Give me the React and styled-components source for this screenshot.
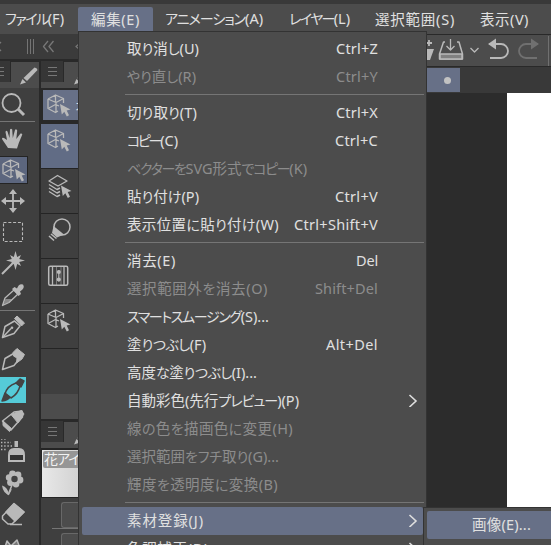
import React, { useLayoutEffect, useRef, useState } from "react";
import styled, { createGlobalStyle, css } from "styled-components";

const c = {
  panel: "#4c4c4c",
  dark: "#393939",
  tools: "#3f3f3f",
  line: "#292929",
  active: "#677087",
  rule: "#757575",
  text: "#e0e0e0",
  muted: "#8c8c8c",
  icon: "#b9b9b9",
};

const Global = createGlobalStyle`
  * { box-sizing: border-box; }
  body { margin: 0; overflow: hidden; background: ${c.panel}; }
`;

const Window = styled.div`
  position: relative;
  width: 551px;
  height: 545px;
  overflow: hidden;
  display: flex;
  flex-direction: column;
  background: ${c.dark};
  font-family: "Noto Sans", "Noto Sans CJK JP", sans-serif;
  font-size: 15px;
  color: ${c.text};
`;

const TitleEdge = styled.div`
  height: 4px;
  flex: none;
  background: #393939;
`;

const MenuBar = styled.nav`
  height: 30px;
  flex: none;
  display: flex;
  align-items: flex-start;
  padding-top: 3px;
  background: ${c.panel};
`;

const MenuTitle = styled.div`
  width: ${(p) => p.$w}px;
  flex: none;
  height: 24px;
  padding-left: ${(p) => p.$pad}px;
  padding-bottom: 1px;
  display: flex;
  align-items: center;
  border-radius: 2px 2px 0 0;
  background: ${(p) => (p.$open ? c.active : "transparent")};
`;

const Words = styled.span`
  white-space: nowrap;
  line-height: 24px;
  display: block;
  font-weight: 400;
  font-feature-settings: "palt";
`;

const Latin = styled.span`
  font-size: 14.5px;
`;

const Kana = styled.span`
  font-size: 14px;
`;

const KANA = /([\u3041-\u30ff]+)/;

/* Sets a label to an exact advance width: kana are tightened first, any slack is shared by every glyph. */
function Label({ text, width }) {
  const ref = useRef(null);
  const [fit, setFit] = useState({ all: 0, kana: 0 });
  const parts = text.split(KANA);
  const kana = parts.filter((s) => KANA.test(s)).join("").length;
  useLayoutEffect(() => {
    const slack = width - ref.current.getBoundingClientRect().width;
    const all = slack / text.length;
    setFit(kana && slack < 0 ? { all: 0, kana: slack / kana } : { all, kana: all });
  }, []);
  return (
    <Words ref={ref}>
      {parts.map((s, i) =>
        KANA.test(s) ? (
          <Kana key={i} style={{ letterSpacing: fit.kana }}>{s}</Kana>
        ) : (
          <Latin key={i} style={{ letterSpacing: fit.all }}>{s}</Latin>
        )
      )}
    </Words>
  );
}

const Body = styled.div`
  flex: 1;
  min-height: 0;
  display: flex;
`;

const Left = styled.div`
  width: 79px;
  flex: none;
  display: flex;
  flex-direction: column;
`;

const DockGrip = styled.div`
  height: 25px;
  flex: none;
  background: #3b3b3b;
`;

const Columns = styled.div`
  display: flex;
  flex: 1;
  background: ${c.line};
  padding-top: 2px;
  gap: 2px;
`;

const Column = styled.div`
  width: ${(p) => p.$w}px;
  flex: none;
  background: ${c.tools};
`;

const TabStrip = styled.div`
  height: 27px;
  display: flex;
  background: #363636;
  border-bottom: 6px solid ${c.panel};
  padding-left: ${(p) => p.$pad}px;
`;

const GripBox = styled.div`
  width: ${(p) => p.$w}px;
  flex: none;
  padding-top: 5px;
`;

const Tab = styled.div`
  flex: 1;
  min-width: 0;
  height: 21px;
  padding-top: 3px;
  background: ${c.panel};
  border-left: 1px solid ${c.line};
  border-top: 1px solid ${c.line};
`;

const Tool = styled.div`
  height: ${(p) => p.$h || 31}px;
  width: 28px;
  display: flex;
  align-items: center;
  justify-content: center;
  padding-right: 2px;
  ${(p) => p.$on && css`
    background: #5c667e;
    border: 1px solid #242424;
    border-left: 0;
    padding-right: 0;
  `}
`;

const PaintTool = styled.div`
  width: 26px;
  height: 26px;
  margin: 3px 0 2px;
  background: #55cbd8;
`;

const Rule = styled.div`
  height: 1px;
  width: 35px;
  background: ${c.rule};
`;

const SubHead = styled.div`
  height: 36px;
  border: solid ${c.line};
  border-width: 2px 0 4px 2px;
  padding-left: 3px;
  display: flex;
  align-items: center;
  gap: 3px;
  overflow: hidden;
  white-space: nowrap;
  background: ${c.active};
  font-size: 13px;
`;

const SubTool = styled.div`
  height: 45px;
  padding: 3px 0 0 5px;
  background: ${(p) => (p.$on ? "#616c85" : c.tools)};
  border-bottom: 1px solid #242424;
`;

const Spacer = styled.div`
  height: ${(p) => p.$h}px;
  background: ${(p) => p.$bg || "transparent"};
`;

const BrushPreview = styled.div`
  height: 50px;
  border: solid #242424;
  border-width: 2px 0 1px 1px;
  padding: 1px;
  background: linear-gradient(90deg, #e8e8e8, #d2d2d2);
`;

const BrushName = styled.div`
  width: 40px;
  height: 17px;
  border-radius: 2px;
  padding-left: 1px;
  white-space: nowrap;
  background: #969696;
  color: #f2f2f2;
  font-size: 14px;
  line-height: 15px;
  letter-spacing: -1px;
  font-feature-settings: "palt";
`;

const Slot = styled.div`
  height: 26px;
  margin: 4px 0 0 20px;
  border: 1px solid #686868;
  border-right: 0;
  border-radius: 3px 0 0 3px;
  background: ${c.panel};
`;

const SlotRule = styled.div`
  height: 1px;
  margin-left: 11px;
  background: ${c.rule};
`;

const Main = styled.main`
  flex: 1;
  display: flex;
  flex-direction: column;
  padding-left: 347px;
  min-width: 0;
`;

const CommandBar = styled.div`
  height: 33px;
  flex: none;
  border-top: 1px solid ${c.line};
  border-bottom: 1px solid ${c.line};
  background: ${c.panel};
`;

const DocTabs = styled.div`
  height: 26px;
  flex: none;
  padding: 1px 0;
  background: ${c.dark};
`;

const DocTab = styled.div`
  width: 34px;
  height: 24px;
  display: flex;
  align-items: center;
  padding-left: 18px;
  background: ${c.active};
`;

const Dot = styled.i`
  width: 7px;
  height: 7px;
  border-radius: 50%;
  background: #c2c2c2;
`;

const Canvas = styled.div`
  flex: 1;
  padding-left: 81px;
  background: #2c2c2c;
`;

const Paper = styled.div`
  height: 100%;
  background: #fff;
`;

const Dropdown = styled.div`
  position: absolute;
  left: 78px;
  top: 31px;
  width: 349px;
  height: 516px;
  padding: 3px 2px 0 3px;
  border: 1px solid #333;
  background: ${c.panel};
`;

const Item = styled.div`
  height: 28px;
  width: 341px;
  display: flex;
  align-items: center;
  justify-content: space-between;
  padding: 0 45px 2px 45px;
  border-radius: 2px;
  color: ${(p) => (p.$off ? c.muted : c.text)};
  background: ${(p) => (p.$on ? c.active : "transparent")};
  ${(p) => p.$arrow && css`padding-right: 5px;`}
`;

const Divider = styled.div`
  height: 1px;
  margin: 3px 0 4px 43px;
  background: ${c.rule};
`;

const Submenu = styled(Dropdown)`
  left: 423px;
  top: 507px;
  width: 140px;
`;

const SubmenuItem = styled(Item)`
  width: 140px;
`;

const Svg = ({ w = 26, h = 26, children }) => (
  <svg width={w} height={h} viewBox={`0 0 ${w} ${h}`} fill="none" stroke={c.icon} strokeWidth="1.5" strokeLinejoin="round" display="block" style={{ flex: "none" }}>
    {children}
  </svg>
);

const Lines = ({ w }) => (
  <Svg w={w} h={11}>
    <path d={`M0 1.5H${w}M0 5.5H${w}M0 9.5H${w}`} stroke="#777" strokeWidth="1" />
  </Svg>
);

const PenTip = ({ x = 0 }) => (
  <Svg w={28} h={24}>
    <g transform={`translate(${x} -1)`} fill={c.icon} stroke="none">
      <path d="M12.5 14L23.5 3.5Q26 3.5 26.5 6L16 17Z" />
      <path d="M11.5 15l3.5 3.5L9 20.5Z" />
    </g>
  </Svg>
);

const Cursor = ({ x, y }) => (
  <path transform={`translate(${x} ${y})`} d="M0 0L10.5 5.6L6.7 6.5L9 11.2L6.8 12.5L4.3 7.8L1.8 10.6Z" fill={c.icon} stroke="none" />
);

const Cube = () => (
  <Svg>
    <path d="M2 7L9.5 3L17.5 6.5V11M2 7V16.5L9.5 20.5L12 19M2 7L10 10.5L17.5 6.5M10 10.5V20M3 16L9.5 12.5L13 14M9.5 3V10" strokeWidth="1.3" />
    <Cursor x={14} y={12} />
  </Svg>
);

const Layers = () => (
  <Svg>
    <path d="M3 9L11.5 3.5L21 9L12 14ZM3 12.5L11 17.5L14 16M3 16L11 21L14 19.5M3 19.5L11 24.5L14 23" strokeWidth="1.4" />
    <Cursor x={15} y={13.5} />
  </Svg>
);

const Bulb = () => (
  <Svg>
    <circle cx="16" cy="10" r="8" />
    <path d="M7.5 9L18 17.5L11 20.5L6 16Z" fill={c.icon} stroke="none" />
    <path d="M5 17L10.5 21.5M3 19L8 23.5" strokeWidth="1.6" />
  </Svg>
);

const Film = () => (
  <Svg>
    <rect x="2.7" y="4.2" width="19" height="19" rx="1.5" />
    <path d="M6.5 4.5V23M18 4.5V23" strokeWidth="1.3" />
    <path d="M10.5 4.5V23M15 4.5V23" strokeWidth=".5" />
    <circle cx="12.8" cy="10" r="2.1" fill={c.icon} stroke="none" />
    <circle cx="12.8" cy="17.5" r="2.1" fill={c.icon} stroke="none" />
    <path d="M12.8 8V19.5" strokeWidth="1.2" />
  </Svg>
);

const NibShape = ({ solid }) => (
  <g>
    <path d="M2.5 23.5L5 12.5L14.5 7L20 12L14 19.5Z" />
    {solid ? (
      <path d="M13 6.5L17 2.5L24.5 8.5L22 13L16.5 17L17 12L13.5 10Z" fill={c.icon} strokeWidth="1" />
    ) : (
      <>
        <path d="M14.5 4.5L17 2L24.5 9L21.5 12Z" fill={c.icon} strokeWidth="1" />
        <path d="M3 23L11 14.5" />
        <circle cx="12" cy="13.8" r="1.3" fill={c.icon} stroke="none" />
      </>
    )}
  </g>
);

const icons = {
  zoom: <Svg><circle cx="11.5" cy="11" r="9" strokeWidth="1.8" /><path d="M18 17L24 23" strokeWidth="3" /></Svg>,
  hand: <Svg><path d="M8 22Q4 16 2 13Q2 11 4 12L7 14L5.5 6Q6 4 7.5 5.5L9.5 12L10 3.5Q11 2 12.2 3.5L12.8 12L15 4Q16 2.5 17.2 4.5L16.3 13L20.5 7.5Q22 7 22.3 8.5L18.8 17L17 22.5Z" fill={c.icon} stroke="none" /></Svg>,
  cube: <Cube />,
  move: <Svg><path d="M13 5V21M5 13H21" strokeWidth="1.8" /><path d="M13 1l4 5H9ZM13 25l4-5H9ZM1 13l5-4V17ZM25 13l-5-4V17Z" fill={c.icon} stroke="none" /></Svg>,
  marquee: <Svg><rect x="3.5" y="3.5" width="19" height="19" strokeDasharray="3 1.8" strokeWidth="1.1" /></Svg>,
  wand: <Svg><path d="M2 24L12 14" strokeWidth="2" /><path d="M15.5 1L17.2 7L21 5L19.2 9L25 10.5L19.2 12L21 16L17.2 14L15.5 20L13.8 14L10 16L11.8 12L6 10.5L11.8 9L10 5L13.8 7Z" fill={c.icon} stroke="none" /></Svg>,
  dropper: <Svg><path d="M2.5 23.5L5 16L14 8L18 12L9 20.5Z" strokeWidth="1.3" /><path d="M12 7L14.5 5L17 6.5Q19 1 23 2.5Q25.5 6 20 9.5L21 12L18.5 14Z" fill={c.icon} stroke="none" /><path d="M5.5 17H12L8.5 20.5L3 23Z" fill={c.icon} stroke="none" opacity=".6" /></Svg>,
  nib: <Svg><NibShape /></Svg>,
  pencil: <Svg><NibShape solid /></Svg>,
  marker: <Svg><path d="M2.5 13L14 4L22 3L22.5 9L11 22Z" /><path d="M11 6.5L21.5 2.5L24 6L18 15Z" fill={c.icon} strokeWidth="1" /><path d="M3 13L11.5 20.5L9.5 23.5L3 17.5Z" fill={c.icon} strokeWidth="1" /></Svg>,
  spray: <Svg><path d="M14.5 2H18V8H14.5ZM8 16Q8 9 14 9H19Q25 9 25 16V23H8Z" fill={c.icon} stroke="none" /><rect x="10" y="16" width="13" height="5" fill="#333" stroke="none" /><path d="M1 0H7M1 3.5H11M1 7H13M1 10.5H7" strokeWidth="1.4" strokeDasharray="1.4 1.8" /></Svg>,
  flower: <Svg><g fill={c.icon} stroke="none"><circle cx="12.5" cy="4" r="3.4" /><circle cx="18" cy="5" r="3.4" /><circle cx="20" cy="10" r="3.4" /><circle cx="16" cy="14" r="3.4" /><circle cx="10.5" cy="12.5" r="3.4" /><circle cx="9" cy="7.5" r="3.2" /><path d="M2 15.5Q8 17 9 25Q3 23 2 15.5ZM9 25Q9 20 12 19Z" /></g><circle cx="14.5" cy="9" r="3.2" fill="#414141" stroke="none" /><path d="M12 15L8 25" /></Svg>,
  eraser: <Svg><path d="M2.5 15L14 3L24 11L12 23H8L2.5 18Z" /><path d="M6 11L14 2.5L24 11L15 20Z" fill={c.icon} /><path d="M10 23.5H22" /></Svg>,
  blend: <Svg><path d="M2 24L7 9L11 14L17 8L23 24Z" fill="#777" /></Svg>,
};

const menus = [
  ["ファイル(F)", 78, 5, 59],
  ["編集(E)", 75, 13, 49, true],
  ["アニメーション(A)", 123, 12, 98],
  ["レイヤー(L)", 87, 13, 61],
  ["選択範囲(S)", 105, 12, 80],
  ["表示(V)", 80, 12, 49],
];

const entries = [
  { t: "取り消し(U)", w: 72, k: "Ctrl+Z", kw: 42 },
  { t: "やり直し(R)", w: 69, k: "Ctrl+Y", kw: 42, off: true },
  null,
  { t: "切り取り(T)", w: 70, k: "Ctrl+X", kw: 42 },
  { t: "コピー(C)", w: 51, k: "Ctrl+C", kw: 43 },
  { t: "ベクターをSVG形式でコピー(K)", w: 180, off: true },
  { t: "貼り付け(P)", w: 72, k: "Ctrl+V", kw: 43 },
  { t: "表示位置に貼り付け(W)", w: 152, k: "Ctrl+Shift+V", kw: 84 },
  null,
  { t: "消去(E)", w: 49, k: "Del", kw: 22 },
  { t: "選択範囲外を消去(O)", w: 141, k: "Shift+Del", kw: 63, off: true },
  { t: "スマートスムージング(S)...", w: 142 },
  { t: "塗りつぶし(F)", w: 79, k: "Alt+Del", kw: 52 },
  { t: "高度な塗りつぶし(I)...", w: 130 },
  { t: "自動彩色(先行プレビュー)(P)", w: 172, arrow: true },
  { t: "線の色を描画色に変更(H)", w: 166, off: true },
  { t: "選択範囲をフチ取り(G)...", w: 152, off: true },
  { t: "輝度を透明度に変換(B)", w: 151, off: true },
  null,
  { t: "素材登録(J)", w: 77, arrow: true, on: true },
  { t: "色調補正(D)", w: 82, arrow: true },
];

const Chevron = () => (
  <Svg w={10} h={14}><path d="M1.5 2L8 8L1.5 14" stroke="#dedede" strokeWidth="1.6" strokeLinejoin="miter" /></Svg>
);

const Grip = () => (
  <Svg w={79} h={25}>
    <path d="M27.5 5V20M30.5 5V20M33.5 5V20" stroke="#747474" strokeWidth="1" />
    <path d="M48 7L43.5 12.5L48 18M53.5 7L49 12.5L53.5 18M1 8L-3 12.5L1 17M79 10L76 12.5L79 15" stroke="#777" strokeWidth="1.3" />
  </Svg>
);

const Commands = () => (
  <Svg w={125} h={31}>
    <path d="M0 14H8L4 25H0Z" fill={c.icon} stroke="none" />
    <path d="M3 5V11M0 8H6" strokeWidth="1.8" />
    <path d="M19 7H17.5L13.5 19V24H36.5V19L33 7H31" />
    <path d="M14 19H36V24H14Z" fill="#808080" />
    <path d="M24.5 4V15M20.5 11L24.5 15L28.5 11M44.5 13L48.5 17L52.5 13" strokeWidth="1.3" />
    <path d="M63 9H75A7 7 0 0 1 75 23H64" strokeWidth="1.8" />
    <path d="M62 9L70 3.5V14.5Z" fill={c.icon} stroke="none" />
    <path d="M112 9H100A7 7 0 0 0 100 23H111" stroke="#707070" strokeWidth="1.8" />
    <path d="M113 9L105 3.5V14.5Z" fill="#707070" stroke="none" />
    <path d="M122.5 1V31" stroke="#707070" strokeWidth="1" />
  </Svg>
);

export default function App() {
  return (
    <Window>
      <Global />
      <TitleEdge />
      <MenuBar>
        {menus.map(([t, w, pad, width, open]) => (
          <MenuTitle key={t} $w={w} $pad={pad} $open={open}><Label text={t} width={width} /></MenuTitle>
        ))}
      </MenuBar>
      <Body>
        <Left>
          <DockGrip><Grip /></DockGrip>
          <Columns>
            <Column $w={39}>
              <TabStrip $pad={0}><GripBox $w={10}><Lines w={4} /></GripBox><Tab><PenTip /></Tab></TabStrip>
              <Tool $h={33}>{icons.zoom}</Tool>
              <Rule />
              <Tool $h={34}>{icons.hand}</Tool>
              <Tool $h={28} $on>{icons.cube}</Tool>
              <Tool $h={34}>{icons.move}</Tool>
              <Tool $h={28}>{icons.marquee}</Tool>
              <Tool $h={34}>{icons.wand}</Tool>
              <Tool $h={30}>{icons.dropper}</Tool>
              <Rule />
              <Tool $h={32}>{icons.nib}</Tool>
              <Tool $h={31}>{icons.pencil}</Tool>
              <PaintTool>
                <Svg>
                  <g stroke="#444">
                    <path d="M5 17Q7 9 16 6L20 9Q18 17 11 21Z" />
                    <path d="M16 6L20 2L24 4L21 10Z" fill="#444" />
                    <path d="M2 24L5 16L10 20Q8 23 2 24Z" fill="#444" />
                  </g>
                </Svg>
              </PaintTool>
              <Tool>{icons.marker}</Tool>
              <Tool>{icons.spray}</Tool>
              <Tool>{icons.flower}</Tool>
              <Tool>{icons.eraser}</Tool>
              <Tool>{icons.blend}</Tool>
            </Column>
            <Column $w={38}>
              <TabStrip $pad={7}><GripBox $w={15}><Lines w={9} /></GripBox><Tab><PenTip x={1} /></Tab></TabStrip>
              <SubHead><Cube />オブジェクト</SubHead>
              <SubTool $on><Cube /></SubTool>
              <SubTool><Layers /></SubTool>
              <SubTool><Bulb /></SubTool>
              <SubTool><Film /></SubTool>
              <SubTool><Cube /></SubTool>
              <Spacer $h={45} />
              <Spacer $h={25} $bg={c.panel} />
              <Spacer $h={2} $bg={c.line} />
              <TabStrip $pad={7}><GripBox $w={15}><Lines w={9} /></GripBox><Tab><PenTip x={1} /></Tab></TabStrip>
              <BrushPreview><BrushName>花アイ</BrushName></BrushPreview>
              <Slot />
              <SlotRule />
              <Slot />
            </Column>
          </Columns>
        </Left>
        <Main>
          <CommandBar><Commands /></CommandBar>
          <DocTabs><DocTab><Dot /></DocTab></DocTabs>
          <Canvas><Paper /></Canvas>
        </Main>
      </Body>
      <Dropdown>
        {entries.map((e, i) =>
          e ? (
            <Item key={i} $off={e.off} $on={e.on} $arrow={e.arrow}>
              <Label text={e.t} width={e.w} />
              {e.k && <Label text={e.k} width={e.kw} />}
              {e.arrow && <Chevron />}
            </Item>
          ) : (
            <Divider key={i} />
          )
        )}
      </Dropdown>
      <Submenu>
        <SubmenuItem $on><Label text="画像(E)..." width={59} /></SubmenuItem>
      </Submenu>
    </Window>
  );
}
